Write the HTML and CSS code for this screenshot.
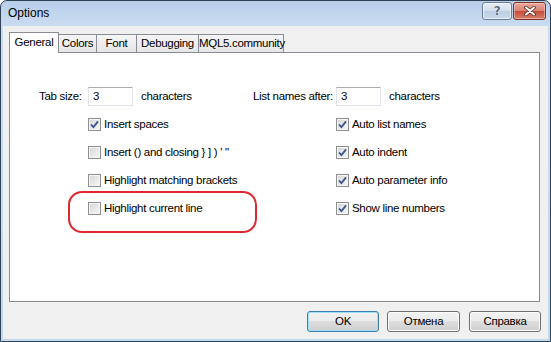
FILE: index.html
```html
<!DOCTYPE html>
<html lang="en">
<head>
    <meta charset="UTF-8" />
    <title>Options</title>
    <link rel="stylesheet" href="styles.css">
</head>
<body>
<div class="window">
    <!-- title bar -->
    <div class="titlebar">
        <span class="title">Options</span>
        <div class="caption-btns">
            <div class="cap help"><span>?</span></div>
            <div class="cap close">
                <svg width="14" height="10" viewBox="0 0 14 10">
                    <path d="M3 1.5 L11 8.5 M11 1.5 L3 8.5" stroke="#5b2a24" stroke-width="3.6" stroke-linecap="round"/>
                    <path d="M3 1.5 L11 8.5 M11 1.5 L3 8.5" stroke="#fff" stroke-width="2" stroke-linecap="round"/>
                </svg>
            </div>
        </div>
    </div>

    <div class="client">
        <!-- tabs -->
        <div class="tabs">
            <div class="tab active t-general">General</div>
            <div class="tab t-colors">Colors</div>
            <div class="tab t-font">Font</div>
            <div class="tab t-debug">Debugging</div>
            <div class="tab t-mql">MQL5.community</div>
        </div>

        <div class="panel">
            <div class="group left">
                <div class="row">
                    <span class="lbl">Tab size:</span>
                    <div class="textbox">3</div>
                    <span>characters</span>
                </div>
                <div class="row opt-row">
                    <span class="check on"><svg width="11" height="11" viewBox="0 0 11 11"><path d="M2 5.5 L4.4 8.2 L9 2.4" fill="none" stroke="#3b5290" stroke-width="1.8"/></svg></span>
                    <span>Insert spaces</span>
                </div>
                <div class="row opt-row">
                    <span class="check"></span>
                    <span>Insert () and closing } ] ) ' "</span>
                </div>
                <div class="row opt-row">
                    <span class="check"></span>
                    <span>Highlight matching brackets</span>
                </div>
                <div class="row opt-row">
                    <span class="marked">
                        <span class="check"></span>
                        <span>Highlight current line</span>
                    </span>
                </div>
            </div>

            <div class="group right">
                <div class="row">
                    <span class="lbl">List names after:</span>
                    <div class="textbox">3</div>
                    <span>characters</span>
                </div>
                <div class="row opt-row">
                    <span class="check on"><svg width="11" height="11" viewBox="0 0 11 11"><path d="M2 5.5 L4.4 8.2 L9 2.4" fill="none" stroke="#3b5290" stroke-width="1.8"/></svg></span>
                    <span>Auto list names</span>
                </div>
                <div class="row opt-row">
                    <span class="check on"><svg width="11" height="11" viewBox="0 0 11 11"><path d="M2 5.5 L4.4 8.2 L9 2.4" fill="none" stroke="#3b5290" stroke-width="1.8"/></svg></span>
                    <span>Auto indent</span>
                </div>
                <div class="row opt-row">
                    <span class="check on"><svg width="11" height="11" viewBox="0 0 11 11"><path d="M2 5.5 L4.4 8.2 L9 2.4" fill="none" stroke="#3b5290" stroke-width="1.8"/></svg></span>
                    <span>Auto parameter info</span>
                </div>
                <div class="row opt-row">
                    <span class="check on"><svg width="11" height="11" viewBox="0 0 11 11"><path d="M2 5.5 L4.4 8.2 L9 2.4" fill="none" stroke="#3b5290" stroke-width="1.8"/></svg></span>
                    <span>Show line numbers</span>
                </div>
            </div>
        </div>

        <!-- dialog buttons -->
        <div class="buttons">
            <div class="btn default b-ok">OK</div>
            <div class="btn b-cancel">Отмена</div>
            <div class="btn b-help">Справка</div>
        </div>
    </div>
</div>
</body>
</html>
```

FILE: styles.css
```css
* {
    margin: 0;
    padding: 0;
    box-sizing: border-box;
}

html, body {
    width: 551px;
    height: 342px;
    overflow: hidden;
    background: #fff;
}

body {
    font-family: "Liberation Sans", Arial, sans-serif;
    font-size: 11.5px;
    letter-spacing: -0.3px;
    color: #000;
}

.window {
    width: 551px;
    height: 342px;
    border: 1px solid #2f4256;
    border-radius: 7px 7px 0 0;
    background: linear-gradient(#b8cfea, #cadcf1 26px, #c3d9ef);
    display: flex;
    flex-direction: column;
}

/* title bar */
.titlebar {
    height: 25px;
    display: flex;
    align-items: flex-start;
    padding: 0 4px 0 7px;
}

.title {
    font-size: 12px;
    letter-spacing: 0;
    line-height: 25px;
}

.caption-btns {
    margin-left: auto;
    margin-top: 1px;
    display: flex;
    gap: 1px;
}

.cap {
    height: 18px;
    border-radius: 3px;
    display: flex;
    align-items: center;
    justify-content: center;
}

.cap.help {
    width: 30px;
    border: 1px solid #6b7e98;
    background: linear-gradient(#e6eef8, #d2deed 50%, #bccde3 50%, #cbdaec);
    box-shadow: inset 0 0 0 1px rgba(255, 255, 255, 0.6);
}

.cap.help span {
    font-family: "DejaVu Sans", sans-serif;
    font-weight: bold;
    font-size: 12px;
    color: #5d6c80;
    text-shadow: 0 0 1px #fff, 0 0 1px #fff;
}

.cap.close {
    width: 33px;
    border: 1px solid #7d3129;
    background: linear-gradient(#e9a99c, #d98072 50%, #c4493a 50%, #d5806b);
    box-shadow: inset 0 0 0 1px rgba(255, 220, 210, 0.5);
}

/* client area */
.client {
    flex: 1;
    margin: 0 2px 2px 2px;
    background: #f0f0f0;
    display: flex;
    flex-direction: column;
}

.tabs {
    display: flex;
    align-items: flex-end;
    height: 20px;
    margin-top: 6px;
    padding-left: 6px;
}

.tab {
    height: 18px;
    margin-right: -1px;
    border: 1px solid #898c95;
    border-bottom: none;
    background: linear-gradient(#f5f5f5, #e6e6e6);
    text-align: center;
    line-height: 17px;
}

.tab.active {
    height: 21px;
    margin-bottom: -1px;
    background: #fff;
    position: relative;
    z-index: 1;
    line-height: 19px;
}

.t-general { width: 50px; }
.t-colors { width: 39px; }
.t-font { width: 41px; }
.t-debug { width: 63px; }
.t-mql { width: 86px; }

.panel {
    height: 250px;
    margin: 0 8px 0 6px;
    border: 1px solid #898c95;
    background: #fff;
    padding: 29px 0 0 29px;
    display: flex;
}

.group.left {
    width: 214px;
}

.group.left .opt-row {
    padding-left: 49px;
}

.group.right .opt-row {
    padding-left: 83px;
}

.row {
    height: 28px;
    display: flex;
    align-items: center;
    white-space: nowrap;
}

.lbl {
    display: inline-block;
}

.group.left .lbl { width: 49px; }
.group.right .lbl { width: 83px; }

.textbox {
    width: 45px;
    height: 19px;
    border: 1px solid #e2e3ea;
    border-top-color: #abadb3;
    padding-left: 4px;
    line-height: 17px;
    margin-right: 8px;
}

.check {
    width: 13px;
    height: 13px;
    flex-shrink: 0;
    margin-right: 3px;
    border: 1px solid #8e8f8f;
    background: linear-gradient(135deg, #d6d6d6, #f6f6f6);
    box-shadow: inset 0 0 0 1px #f4f4f4;
    display: flex;
    align-items: center;
    justify-content: center;
}

.check.on svg {
    display: block;
}

.marked {
    position: relative;
    height: 28px;
    display: flex;
    align-items: center;
}

.marked::after {
    content: "";
    position: absolute;
    left: -20px;
    top: -3px;
    width: 185px;
    height: 38px;
    border: 2px solid #e2262f;
    border-radius: 14px;
}

/* dialog buttons */
.buttons {
    display: flex;
    justify-content: flex-end;
    margin-top: 9px;
    padding-right: 7px;
}

.btn {
    height: 21px;
    border: 1px solid #707070;
    border-radius: 3px;
    background: linear-gradient(#f2f2f2, #ebebeb 50%, #dddddd 50%, #cfcfcf);
    box-shadow: inset 0 0 0 1px #fcfcfc;
    text-align: center;
    line-height: 19px;
}

.b-ok { width: 72px; margin-right: 8px; }
.b-cancel { width: 73px; margin-right: 9px; }
.b-help { width: 72px; }

.btn.default {
    border-color: #3c7fb1;
    box-shadow: inset 0 0 0 1px #9fe0f8;
}
```
